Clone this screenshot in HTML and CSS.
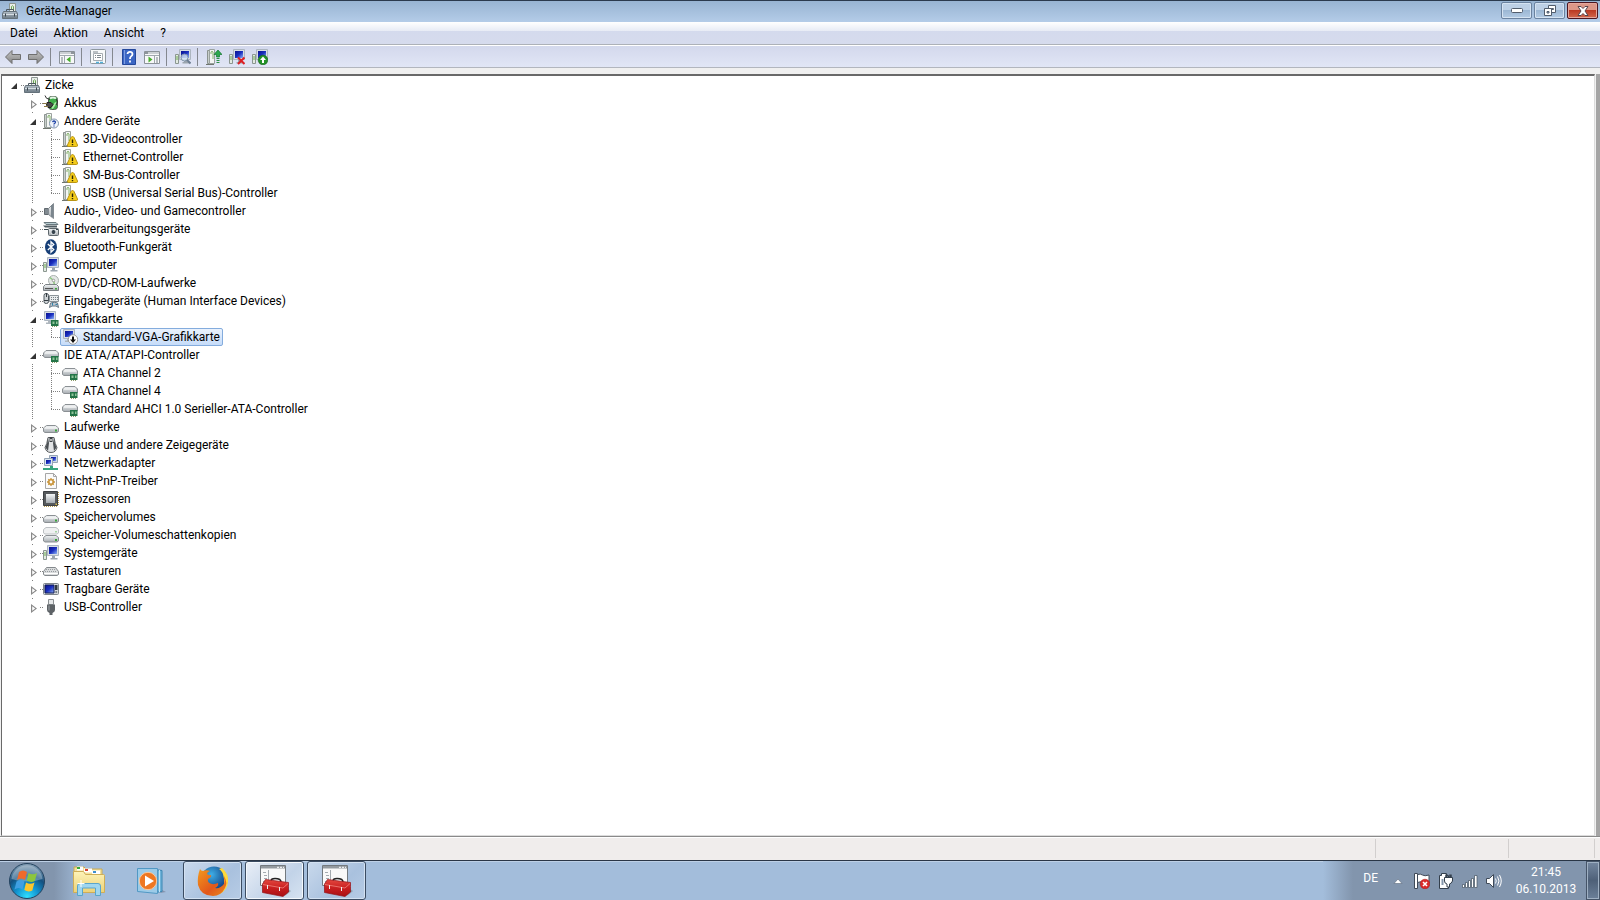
FILE: index.html
```html
<!DOCTYPE html>
<html lang="de">
<head>
  <meta charset="UTF-8">
  <meta name="viewport" content="width=device-width, initial-scale=1.0">
  <title>Geräte-Manager</title>
  <link rel="stylesheet" href="styles.css">
</head>
<body>
  <svg class="sprite" width="0" height="0" aria-hidden="true">
    <defs>
      <linearGradient id="metal" x1="0" y1="0" x2="0" y2="1"><stop offset="0" stop-color="#f4f6f7"/><stop offset="1" stop-color="#a5abb0"/></linearGradient>
      <linearGradient id="steel" x1="0" y1="0" x2="0" y2="1"><stop offset="0" stop-color="#b4bfc8"/><stop offset="1" stop-color="#6c7a84"/></linearGradient>
      <linearGradient id="lcd" x1="0" y1="0" x2="1" y2="1"><stop offset="0" stop-color="#0a118f"/><stop offset=".5" stop-color="#1a2fc0"/><stop offset="1" stop-color="#8fb4f5"/></linearGradient>
      <linearGradient id="arrow" x1="0" y1="0" x2="0" y2="1"><stop offset="0" stop-color="#c3c3c3"/><stop offset="1" stop-color="#858585"/></linearGradient>
      <linearGradient id="red" x1="0" y1="0" x2="0" y2="1"><stop offset="0" stop-color="#e5483f"/><stop offset=".5" stop-color="#c81f20"/><stop offset="1" stop-color="#a90f14"/></linearGradient>
      <linearGradient id="folder" x1="0" y1="0" x2="0" y2="1"><stop offset="0" stop-color="#fdf3b8"/><stop offset="1" stop-color="#ecd278"/></linearGradient>
      <radialGradient id="orb" cx=".5" cy=".95" r=".95"><stop offset="0" stop-color="#2fe0ff"/><stop offset=".35" stop-color="#1293cf"/><stop offset=".65" stop-color="#14507f"/><stop offset="1" stop-color="#8aa3b8"/></radialGradient>
      <linearGradient id="fox" x1="0" y1="0" x2="1" y2="1"><stop offset="0" stop-color="#f39a1d"/><stop offset=".6" stop-color="#e2571b"/><stop offset="1" stop-color="#e98a1c"/></linearGradient>
      <radialGradient id="globe" cx=".4" cy=".3" r=".7"><stop offset="0" stop-color="#3fb0e8"/><stop offset="1" stop-color="#0b2f73"/></radialGradient>
    </defs>

    <symbol id="i-manager" viewBox="0 0 16 16">
      <path d="M7.5.5h6v8h-6z" fill="#e9ede9" stroke="#8d9691"/>
      <path d="M9.500 7V3.500q1-1.500 2 0V7" fill="none" stroke="#6aa553"/>
      <path d="M4.500 9V6.500h7V9" fill="none" stroke="#4d5961"/>
      <path d="M1.500 8.500h13l1 2.500v4.500H.5V11z" fill="url(#steel)" stroke="#64717a"/>
      <path d="M1 11.500h14" stroke="#d7dfe4"/>
      <path d="M3.500 10.500v3M12.500 10.500v3" stroke="#3b464d"/>
    </symbol>
    <symbol id="i-akku" viewBox="0 0 16 16">
      <rect x="5.500" y="1.500" width="9" height="13" rx="3" fill="#3fae4a" stroke="#4d5a4e"/>
      <path d="M7 3.500q3-2 6 0" stroke="#e4f5e4" stroke-width="2" fill="none"/>
      <path d="M9 13.500l4-6" stroke="#a9eca5" stroke-width="2"/>
      <path d="M2 .5Q2.500 4 7 4.500M13 4q3 3 0 6" fill="none" stroke="#333"/>
      <path d="M4 7.500h4l2 2-2 3H5L3.500 10z" fill="#4a4a4a" stroke="#222"/>
      <path d="M0 8.500h4M1 11.500h4" stroke="#8c7a45"/>
    </symbol>
    <symbol id="i-card" viewBox="0 0 16 16">
      <path d="M1.500 1.500h2v13h-2z" fill="#c8cecb" stroke="#8b938f"/>
      <path d="M3.500.5h5v14h-5z" fill="#f3f5f3" stroke="#9aa29e"/>
      <path d="M5 5V3q1-1.500 2 0v7" fill="none" stroke="#86b36f"/>
      <path d="M0 15.500h8" stroke="#70766f"/>
    </symbol>
    <symbol id="i-other" viewBox="0 0 16 16">
      <use href="#i-card" width="16" height="16"/>
      <circle cx="11" cy="10.500" r="4.500" fill="#f0f4fa" stroke="#8093ab"/>
      <path d="M9.500 9q1.500-2 3 0 0 1-1.500 2v.5M11 12.500v1" fill="none" stroke="#2346a8" stroke-width="1.300"/>
    </symbol>
    <symbol id="i-warn" viewBox="0 0 16 16">
      <use href="#i-card" width="16" height="16"/>
      <path d="M10.500 5.500q1 0 1.500 1l3.500 7.500q.2 1.500-1 1.500h-8q-1.200 0-1-1.500L9 6.500q.5-1 1.500-1z" fill="#f4cc1b" stroke="#b99413"/>
      <path d="M10.500 8.500v3.500M10.500 13v1.300" stroke="#2d2508" stroke-width="1.400"/>
    </symbol>
    <symbol id="i-audio" viewBox="0 0 16 16">
      <path d="M1.500 5.500h4v6h-4z" fill="#818a91" stroke="#61696f"/>
      <path d="M5.500 5.500L10.500.5v15l-5-4z" fill="url(#metal)" stroke="#858d93"/>
      <path d="M9 2v12" stroke="#7b868e" stroke-width="2"/>
    </symbol>
    <symbol id="i-camera" viewBox="0 0 16 16">
      <path d="M1 1.500h12l2 2H3z" fill="#b7cbd0" stroke="#69787e"/>
      <path d="M0 4.500h14v2H2z" fill="#4f5c63"/>
      <rect x="5.500" y="7.500" width="10" height="7" rx="1" fill="url(#metal)" stroke="#5e676c"/>
      <circle cx="10.500" cy="11" r="2.500" fill="#36434d" stroke="#e0e5e8"/>
      <path d="M13 8.500h2M1 8.500h4" stroke="#37474f"/>
    </symbol>
    <symbol id="i-bt" viewBox="0 0 16 16">
      <ellipse cx="8" cy="8" rx="6" ry="7.800" fill="#173f77"/>
      <path d="M4.800 5l6 5.500L8 13.200V2.800l2.800 2.700-6 5.500" fill="none" stroke="#fff" stroke-width="1.300"/>
    </symbol>
    <symbol id="i-computer" viewBox="0 0 16 16">
      <path d="M.5 5.500h3v9h-3z" fill="#e3ebe2" stroke="#8b9790"/>
      <path d="M2 7v4" stroke="#6fae55"/>
      <path d="M4.500.5h11v10h-11z" fill="#d8dee5" stroke="#adb6c0"/>
      <path d="M6 2h8v7H6z" fill="url(#lcd)"/>
      <path d="M9 11h3v2h2.500v1.500h-7V13H9z" fill="#9ba5ae"/>
    </symbol>
    <symbol id="i-dvd" viewBox="0 0 16 16">
      <circle cx="10.500" cy="5.500" r="5" fill="#e4e8e6" stroke="#a9b0ad"/>
      <path d="M10.500 5.500L7 2.500M10.500 5.500l1 4.500" stroke="#8cc77d" stroke-width="1.500"/>
      <circle cx="10.500" cy="5.500" r="1.300" fill="#fff" stroke="#999"/>
      <path d="M2.500 9.500h11l2 2v4H.5v-4z" fill="url(#metal)" stroke="#7b8185"/>
      <path d="M2 13.500h8" stroke="#555"/><path d="M12 13h2v1.500h-2z" fill="#3da53d"/>
    </symbol>
    <symbol id="i-hid" viewBox="0 0 16 16">
      <path d="M6.500 2.500h9v6h-9z" fill="#e9eced" stroke="#8c9499"/>
      <path d="M8 4.500h7M8 6.500h7" stroke="#788188" stroke-dasharray="1 1"/>
      <rect x="1" y=".5" width="4.500" height="10" rx="2" fill="#cfd4d7" stroke="#4e575d"/>
      <path d="M3.500 0v4M1 7.500h4" stroke="#343c42"/>
      <path d="M6.500 14.500l1-4.500q4-1.500 7 0l1 4.500-2.500-1.500H9z" fill="#bcc6ce" stroke="#647582"/>
      <path d="M9.500 10v2.500M12.500 11.500h2" stroke="#3183ac"/>
    </symbol>
    <symbol id="i-chip" viewBox="0 0 16 16">
      <path d="M8 9h7.500v6H8z" fill="#237447"/>
      <path d="M9.500 10.500h2v2.500h-2zM13 10.500h1.500V13H13z" fill="#91c49a"/>
      <path d="M9 15.500h5" stroke="#8d9b69" stroke-dasharray="1 1"/>
    </symbol>
    <symbol id="i-gpu" viewBox="0 0 16 16">
      <path d="M1.500.5h11v9h-11z" fill="#d8dee5" stroke="#adb6c0"/>
      <path d="M3 2h8v6H3z" fill="url(#lcd)"/>
      <path d="M5 10h3v3H3v-1.500h2z" fill="#aeb6bd"/>
      <use href="#i-chip" width="16" height="16"/>
    </symbol>
    <symbol id="i-vga" viewBox="0 0 16 16">
      <path d="M1.500.5h11v9h-11z" fill="#d8dee5" stroke="#adb6c0"/>
      <path d="M3 2h8v6H3z" fill="url(#lcd)"/>
      <path d="M5 10h3v3H3v-1.500h2z" fill="#aeb6bd"/>
      <circle cx="11" cy="10.500" r="4.700" fill="#fff" stroke="#888" stroke-width=".8"/>
      <path d="M11 7.500v4" stroke="#111" stroke-width="2"/><path d="M8 10.500h6l-3 3.500z" fill="#111"/>
    </symbol>
    <symbol id="i-drive" viewBox="0 0 16 16">
      <path d="M3.500 6.500h9l3 2.500v3.500l-1.500 1H2L.5 12.500V9z" fill="url(#metal)" stroke="#8b9094"/>
      <path d="M1.500 9h13" stroke="#fff"/>
      <path d="M12 10.500h2v2h-2z" fill="#3aa53a"/>
    </symbol>
    <symbol id="i-ide" viewBox="0 0 16 16">
      <path d="M3 3.500h10l2.500 2.500v3.500l-1.500 1H2L.5 9.500V6z" fill="url(#metal)" stroke="#8b9094"/>
      <path d="M2 6h12" stroke="#fff"/>
      <use href="#i-chip" width="16" height="16"/>
    </symbol>
    <symbol id="i-mouse" viewBox="0 0 16 16">
      <path d="M5 .5h6q1 7 3 10-1 5-6 5t-6-5q2-3 3-10z" fill="#e1e3e5" stroke="#5d6164"/>
      <path d="M5 1q-.5 6-2.500 9.500L5 14l1-8zM11 1q.5 6 2.500 9.500L11 14l-1-8z" fill="#4b5054"/>
      <path d="M6.500 0h3v5h-3z" fill="#3b4044"/><circle cx="8" cy="3" r="1" fill="#ddd"/>
    </symbol>
    <symbol id="i-net" viewBox="0 0 16 16">
      <path d="M6.500.5h8v7h-8z" fill="#cfd9e5" stroke="#96a5b5"/><path d="M8 2h5v4H8z" fill="url(#lcd)"/>
      <path d="M1.500 3.500h8v7h-8z" fill="#dde6ef" stroke="#96a5b5"/><path d="M3 5h5v4H3z" fill="url(#lcd)"/>
      <path d="M7 11h3v2h5v2H0v-2h7z" fill="#38a67d"/>
    </symbol>
    <symbol id="i-pnp" viewBox="0 0 16 16">
      <path d="M2.500.5h8l3 3v12h-11z" fill="#fafafa" stroke="#a7a7a7"/><path d="M10.500.5v3h3" fill="none" stroke="#a7a7a7"/>
      <circle cx="8" cy="9" r="3" fill="#c9953b"/>
      <path d="M8 5v8M4 9h8M5.300 6.300l5.400 5.400M10.700 6.300l-5.400 5.400" stroke="#c9953b" stroke-width="1.300"/>
      <circle cx="8" cy="9" r="1.400" fill="#fff"/>
    </symbol>
    <symbol id="i-cpu" viewBox="0 0 16 16">
      <path d="M1 15.200h14M15.200 1v14" stroke="#b79b4e" stroke-width="1.500" stroke-dasharray="1 1"/>
      <path d="M.5.500h14v14H.5z" fill="#565a5d" stroke="#3d4043"/>
      <path d="M3 3h9v9H3z" fill="url(#metal)"/>
      <path d="M12.500 12.500h1.500V14h-1.500z" fill="#d8bc4a"/>
    </symbol>
    <symbol id="i-shadow" viewBox="0 0 16 16">
      <path d="M3 .5h10l2.500 2V6l-1.500 1H2L.5 6V2.500z" fill="#eff0f1" stroke="#bcc0c3"/>
      <path d="M12 4h2v1.500h-2z" fill="#a4d4a4"/>
      <path d="M3 8.500h10l2.500 2V14l-1.500 1H2L.5 14v-3.500z" fill="url(#metal)" stroke="#8b9094"/>
      <path d="M12 12h2v2h-2z" fill="#3aa53a"/>
    </symbol>
    <symbol id="i-keyboard" viewBox="0 0 16 16">
      <path d="M3.500 4.500h9l3 4v3l-1.500 1H2l-1.500-1v-3z" fill="#dadcdd" stroke="#84898d"/>
      <path d="M3 6.500h10M2 8.500h12" stroke="#969b9f" stroke-dasharray="1 1"/>
      <path d="M1 10.500h14" stroke="#fff"/>
    </symbol>
    <symbol id="i-portable" viewBox="0 0 16 16">
      <rect x=".5" y="2.500" width="15" height="11" rx="1" fill="#d5d9dd" stroke="#7e858b"/>
      <path d="M2 4h9v8H2z" fill="url(#lcd)" stroke="#101a55"/>
      <path d="M12 4h2.500v5H12z" fill="#30383f"/><circle cx="13.200" cy="11" r="1" fill="#6c767d"/>
    </symbol>
    <symbol id="i-usb" viewBox="0 0 16 16">
      <path d="M5.500.5h5v5h-5z" fill="#e6e8e9" stroke="#8b9093"/>
      <path d="M4 5.500h8V11q0 2-2.500 3v2h-3v-2Q4 13 4 11z" fill="#5d6266"/>
      <path d="M6 6.500v5" stroke="#a1a6aa"/>
    </symbol>
    <symbol id="i-back" viewBox="0 0 16 16">
      <path d="M.5 8L7 1.500v4h8.500v5H7v4z" fill="url(#arrow)" stroke="#6f6f6f"/>
    </symbol>
    <symbol id="i-console" viewBox="0 0 16 16">
      <path d="M.5 2.500h15v12H.5z" fill="#f7f8f9" stroke="#8b9299"/>
      <path d="M1 4h14M1 6.500h14" stroke="#a1a8af"/><path d="M12 4h3" stroke="#4f5962"/>
      <path d="M2 9h2M2 11h2M2 13h2" stroke="#76818a"/><path d="M5.500 7v7" stroke="#a1a8af"/>
      <path d="M11.500 7.500v6l-4-3z" fill="#46ae2b"/>
    </symbol>
    <symbol id="i-props" viewBox="0 0 16 16">
      <rect x=".5" y=".5" width="15" height="14" rx="1" fill="#f7f9fa" stroke="#8e989f"/>
      <path d="M3.500 4.500h9v7h-9z" fill="#fff" stroke="#a6adb2"/>
      <path d="M3 3h5M5 6.500h1M7 6.500h4M5 8.500h1M7 8.500h4" stroke="#7e888f"/>
      <path d="M6 13.500h3M10 13.500h3" stroke="#51b0da" stroke-width="1.500"/>
    </symbol>
    <symbol id="i-help" viewBox="0 0 16 16">
      <path d="M1.500.5h13v15h-13z" fill="#3b66c4" stroke="#24489c"/><path d="M3.500 1v14" stroke="#7c9be0"/>
      <path d="M6.500 5q.2-2.200 2.500-2.200T11.500 5q0 1.500-1.300 2.200T9 10M9 11.500v2" fill="none" stroke="#fff" stroke-width="1.800"/>
    </symbol>
    <symbol id="i-scan" viewBox="0 0 16 16">
      <use href="#i-computer" width="16" height="16"/>
      <circle cx="9.500" cy="8.500" r="3.500" fill="#d4e4f3" fill-opacity=".8" stroke="#7f94a9"/>
      <path d="M12 11l3.500 3.500" stroke="#6b7d90" stroke-width="2"/>
    </symbol>
    <symbol id="i-update" viewBox="0 0 16 16">
      <use href="#i-card" width="16" height="16"/>
      <path d="M12 1l4 4.500h-2.500V8h-3V5.500H8z" fill="#2ca84c" stroke="#157731" stroke-width=".7"/>
      <path d="M10.500 9.500h3M10.500 11.500h3M10.500 13.500h3" stroke="#2c9247"/>
    </symbol>
    <symbol id="i-remove" viewBox="0 0 16 16">
      <use href="#i-computer" width="16" height="16"/>
      <path d="M9 8.500l6.500 6.500M15.500 8.500L9 15" stroke="#dd1f24" stroke-width="2"/>
    </symbol>
    <symbol id="i-enable" viewBox="0 0 16 16">
      <use href="#i-computer" width="16" height="16"/>
      <circle cx="11" cy="11" r="4.800" fill="#229227" stroke="#146018" stroke-width=".6"/>
      <path d="M11 14v-4" stroke="#fff" stroke-width="2"/><path d="M8 11l3-3.500 3 3.500z" fill="#fff"/>
    </symbol>
    <symbol id="i-toolbox" viewBox="0 0 32 32">
      <path d="M1.500.5h25v20h-25z" fill="#f9f9f9" stroke="#73797e"/>
      <path d="M2 1h24v2.500H2z" fill="#949a9f"/><path d="M18 2.300h2M21 2.300h2M24 2.300h1" stroke="#fff"/>
      <path d="M9.500 5v12M4 7.500h3M5 10.500h3M5 13.500h3M4 16.500h3" stroke="#a4abb0"/>
      <path d="M26 31l6-5-3-2z" fill="#566" opacity=".4"/>
      <path d="M12 16q0-2.500 4-2.500 6 0 6 3.500" fill="none" stroke="#222" stroke-width="1.500"/>
      <path d="M3.500 19l3-4.500L29.500 17.500v4V27L24 31.500 3.500 27.500z" fill="url(#red)" stroke="#941219" stroke-width=".7"/>
      <path d="M4 19.500l20 3.500 5-4.500" fill="none" stroke="#f0837b" stroke-width=".8"/>
      <path d="M8.500 20v4M20.500 22v4" stroke="#eee"/>
    </symbol>
  </svg>

  <main class="window">
    <header class="titlebar">
      <svg class="icon"><use href="#i-manager"/></svg>
      <h1 class="title">Geräte-Manager</h1>
      <div class="window-buttons">
        <button class="win-btn" aria-label="Minimieren"><svg width="12" height="6"><rect x=".5" y=".5" width="11" height="4" rx="1" fill="#fff" stroke="#525d6c"/></svg></button>
        <button class="win-btn" aria-label="Verkleinern"><svg width="12" height="12"><path d="M4.500.5h7v7h-7z" fill="#fff" stroke="#525d6c"/><path d="M7.500 3.500h2v1h-2z" fill="none" stroke="#525d6c"/><path d="M.5 3.500h7v7h-7z" fill="#fff" stroke="#525d6c"/><path d="M3 6.500h2v1.500H3z" fill="#9db8d6" stroke="#525d6c"/></svg></button>
        <button class="win-btn close" aria-label="Schließen"><svg width="12" height="10"><path d="M1 .5h3l2 2 2-2h3L8 5l3 4.500H8l-2-2-2 2H1L4 5z" fill="#fff" stroke="#58434a"/></svg></button>
      </div>
    </header>

    <nav class="menubar">
      <button class="menu-item">Datei</button>
      <button class="menu-item">Aktion</button>
      <button class="menu-item">Ansicht</button>
      <button class="menu-item">?</button>
    </nav>

    <div class="toolbar">
      <button class="tool" aria-label="Zurück"><svg class="icon"><use href="#i-back"/></svg></button>
      <button class="tool" aria-label="Vorwärts"><svg class="icon flip"><use href="#i-back"/></svg></button>
      <span class="sep"></span>
      <button class="tool" aria-label="Konsolenstruktur"><svg class="icon"><use href="#i-console"/></svg></button>
      <span class="sep"></span>
      <button class="tool" aria-label="Eigenschaften"><svg class="icon"><use href="#i-props"/></svg></button>
      <span class="sep"></span>
      <button class="tool" aria-label="Hilfe"><svg class="icon"><use href="#i-help"/></svg></button>
      <button class="tool" aria-label="Aktionsbereich"><svg class="icon flip"><use href="#i-console"/></svg></button>
      <span class="sep"></span>
      <button class="tool" aria-label="Nach geänderter Hardware suchen"><svg class="icon"><use href="#i-scan"/></svg></button>
      <span class="sep"></span>
      <button class="tool" aria-label="Treibersoftware aktualisieren"><svg class="icon"><use href="#i-update"/></svg></button>
      <button class="tool" aria-label="Deinstallieren"><svg class="icon"><use href="#i-remove"/></svg></button>
      <button class="tool" aria-label="Aktivieren"><svg class="icon"><use href="#i-enable"/></svg></button>
    </div>

    <div class="content">
      <ul class="tree">
        <li class="root">
          <div class="row"><button class="toggle open" aria-label="Zicke"></button><svg class="icon"><use href="#i-manager"/></svg><span class="label">Zicke</span></div>
          <ul class="branch">
            <li><div class="row"><button class="toggle" aria-label="Akkus"></button><svg class="icon"><use href="#i-akku"/></svg><span class="label">Akkus</span></div></li>
            <li>
              <div class="row"><button class="toggle open" aria-label="Andere Geräte"></button><svg class="icon"><use href="#i-other"/></svg><span class="label">Andere Geräte</span></div>
              <ul class="branch">
                <li><div class="row leaf"><svg class="icon"><use href="#i-warn"/></svg><span class="label">3D-Videocontroller</span></div></li>
                <li><div class="row leaf"><svg class="icon"><use href="#i-warn"/></svg><span class="label">Ethernet-Controller</span></div></li>
                <li><div class="row leaf"><svg class="icon"><use href="#i-warn"/></svg><span class="label">SM-Bus-Controller</span></div></li>
                <li><div class="row leaf"><svg class="icon"><use href="#i-warn"/></svg><span class="label">USB (Universal Serial Bus)-Controller</span></div></li>
              </ul>
            </li>
            <li><div class="row"><button class="toggle" aria-label="Audio"></button><svg class="icon"><use href="#i-audio"/></svg><span class="label">Audio-, Video- und Gamecontroller</span></div></li>
            <li><div class="row"><button class="toggle" aria-label="Bildverarbeitungsgeräte"></button><svg class="icon"><use href="#i-camera"/></svg><span class="label">Bildverarbeitungsgeräte</span></div></li>
            <li><div class="row"><button class="toggle" aria-label="Bluetooth-Funkgerät"></button><svg class="icon"><use href="#i-bt"/></svg><span class="label">Bluetooth-Funkgerät</span></div></li>
            <li><div class="row"><button class="toggle" aria-label="Computer"></button><svg class="icon"><use href="#i-computer"/></svg><span class="label">Computer</span></div></li>
            <li><div class="row"><button class="toggle" aria-label="DVD/CD-ROM-Laufwerke"></button><svg class="icon"><use href="#i-dvd"/></svg><span class="label">DVD/CD-ROM-Laufwerke</span></div></li>
            <li><div class="row"><button class="toggle" aria-label="Eingabegeräte"></button><svg class="icon"><use href="#i-hid"/></svg><span class="label">Eingabegeräte (Human Interface Devices)</span></div></li>
            <li>
              <div class="row"><button class="toggle open" aria-label="Grafikkarte"></button><svg class="icon"><use href="#i-gpu"/></svg><span class="label">Grafikkarte</span></div>
              <ul class="branch">
                <li><div class="row leaf selected"><svg class="icon"><use href="#i-vga"/></svg><span class="label">Standard-VGA-Grafikkarte</span></div></li>
              </ul>
            </li>
            <li>
              <div class="row"><button class="toggle open" aria-label="IDE ATA/ATAPI-Controller"></button><svg class="icon"><use href="#i-ide"/></svg><span class="label">IDE ATA/ATAPI-Controller</span></div>
              <ul class="branch">
                <li><div class="row leaf"><svg class="icon"><use href="#i-ide"/></svg><span class="label">ATA Channel 2</span></div></li>
                <li><div class="row leaf"><svg class="icon"><use href="#i-ide"/></svg><span class="label">ATA Channel 4</span></div></li>
                <li><div class="row leaf"><svg class="icon"><use href="#i-ide"/></svg><span class="label">Standard AHCI 1.0 Serieller-ATA-Controller</span></div></li>
              </ul>
            </li>
            <li><div class="row"><button class="toggle" aria-label="Laufwerke"></button><svg class="icon"><use href="#i-drive"/></svg><span class="label">Laufwerke</span></div></li>
            <li><div class="row"><button class="toggle" aria-label="Mäuse und andere Zeigegeräte"></button><svg class="icon"><use href="#i-mouse"/></svg><span class="label">Mäuse und andere Zeigegeräte</span></div></li>
            <li><div class="row"><button class="toggle" aria-label="Netzwerkadapter"></button><svg class="icon"><use href="#i-net"/></svg><span class="label">Netzwerkadapter</span></div></li>
            <li><div class="row"><button class="toggle" aria-label="Nicht-PnP-Treiber"></button><svg class="icon"><use href="#i-pnp"/></svg><span class="label">Nicht-PnP-Treiber</span></div></li>
            <li><div class="row"><button class="toggle" aria-label="Prozessoren"></button><svg class="icon"><use href="#i-cpu"/></svg><span class="label">Prozessoren</span></div></li>
            <li><div class="row"><button class="toggle" aria-label="Speichervolumes"></button><svg class="icon"><use href="#i-drive"/></svg><span class="label">Speichervolumes</span></div></li>
            <li><div class="row"><button class="toggle" aria-label="Speicher-Volumeschattenkopien"></button><svg class="icon"><use href="#i-shadow"/></svg><span class="label">Speicher-Volumeschattenkopien</span></div></li>
            <li><div class="row"><button class="toggle" aria-label="Systemgeräte"></button><svg class="icon"><use href="#i-computer"/></svg><span class="label">Systemgeräte</span></div></li>
            <li><div class="row"><button class="toggle" aria-label="Tastaturen"></button><svg class="icon"><use href="#i-keyboard"/></svg><span class="label">Tastaturen</span></div></li>
            <li><div class="row"><button class="toggle" aria-label="Tragbare Geräte"></button><svg class="icon"><use href="#i-portable"/></svg><span class="label">Tragbare Geräte</span></div></li>
            <li><div class="row"><button class="toggle" aria-label="USB-Controller"></button><svg class="icon"><use href="#i-usb"/></svg><span class="label">USB-Controller</span></div></li>
          </ul>
        </li>
      </ul>
    </div>

    <div class="statusbar">
      <span class="pane grow"></span>
      <span class="pane wide"></span>
      <span class="pane narrow"></span>
    </div>
  </main>

  <footer class="taskbar">
    <button class="start" aria-label="Start">
      <svg width="38" height="38" viewBox="0 0 38 38">
        <circle cx="19" cy="19" r="17.500" fill="url(#orb)" stroke="#24435f"/>
        <path d="M3.500 17A15.600 15.600 0 0 1 34.500 17Q19 22 3.500 17z" fill="#fff" opacity=".3"/>
        <path d="M11 10q4-3 8 0l-2 8q-4-3-8 0z" fill="#ef6a2c"/>
        <path d="M20.500 11q4 2.500 8.500 0l-2.200 8q-4 2-8-.5z" fill="#8cc63e"/>
        <path d="M8.500 19.500q4-3 8 0l-2 8q-4-3-8 0z" fill="#3f9fe2"/>
        <path d="M18 20.500q4 2.500 8.500 0l-2.200 8q-4 2-8-.5z" fill="#fbc62c"/>
      </svg>
    </button>
    <button class="task" aria-label="Windows-Explorer">
      <svg width="34" height="32" viewBox="0 0 34 32">
        <path d="M2 5V2h10l2 2h16v6H2z" fill="#f3e19b" stroke="#c6a956"/>
        <path d="M5 1.500h6v4H5z" fill="#fff"/><path d="M5 2h3v2H5z" fill="#39a935"/>
        <path d="M12 3.500h8v4h-8z" fill="#fff"/><path d="M13 4h3v2h-3z" fill="#d8412c"/>
        <path d="M20 5.500h8v4h-8z" fill="#fff"/><path d="M21 6h3v2h-3z" fill="#3d8fd1"/>
        <path d="M1.500 6.500h10l2 3h18q1 0 1 1v17h-31z" fill="url(#folder)" stroke="#cfae57"/>
        <path d="M5.500 30.500V21q0-2.500 2.500-2.500h18q2.500 0 2.500 2.500v9.500h-5V23h-13v7.500z" fill="#9fd6ef" stroke="#5aa5cb"/>
        <path d="M9 15v7M5.500 18.500h7" stroke="#fff"/>
      </svg>
    </button>
    <button class="task" aria-label="Windows Media Player">
      <svg width="30" height="28" viewBox="0 0 30 28">
        <path d="M24 26l6-1-4-2z" fill="#556" opacity=".4"/>
        <path d="M19 2.500l7 1v21l-7 1z" fill="#6fb3d9" stroke="#3c87b3"/><path d="M23.500 3v22" stroke="#c3e4f5"/>
        <path d="M1.500 1.500h20v25l-20-2z" fill="#9ccbe8" stroke="#5198c4"/>
        <circle cx="12" cy="14" r="8.700" fill="#ee7722" stroke="#f8c9a0"/>
        <path d="M9 8.500v11l9-5.500z" fill="#fff"/>
      </svg>
    </button>
    <button class="task running" aria-label="Firefox">
      <svg width="32" height="32" viewBox="0 0 32 32">
        <circle cx="17" cy="15" r="13.500" fill="url(#globe)"/>
        <path d="M25 3q7 6 6 14-1 8-8 12 5-7 4-15T22 4z" fill="#ffd93b"/>
        <path d="M3 4q1 2 3 2 4-1.500 7 0-3 1-3 3 1 1.500 4 1 1 2-3 4-1 4 4 5 3 .5 6-1 1 3-3 5 5 1 9-4 1-3 0-8 4 7 1 12-4 8-12 8Q4 31 1 20 0 12 3 4z" fill="url(#fox)"/>
      </svg>
    </button>
    <button class="task running active" aria-label="Geräte-Manager"><svg width="32" height="32"><use href="#i-toolbox"/></svg></button>
    <button class="task running" aria-label="Computerverwaltung"><svg width="32" height="32"><use href="#i-toolbox"/></svg></button>

    <div class="tray">
      <span class="lang">DE</span>
      <button class="tray-btn" aria-label="Ausgeblendete Symbole"><svg width="16" height="16"><path d="M4 10.500L8 6l4 4.500z" fill="#fff" stroke="#5b6a7c" stroke-width=".6"/></svg></button>
      <button class="tray-btn" aria-label="Wartungscenter"><svg width="16" height="16"><path d="M.5.5h3v15h-3z" fill="#fff" stroke="#3f4a58"/><path d="M3.500 1.500q3-1 5 .5t6.500 0v8q-4 1-6-.5t-5.500 0z" fill="#fff" stroke="#3f4a58"/><circle cx="11" cy="11" r="4.800" fill="#d92b2b" stroke="#a91515" stroke-width=".5"/><path d="M9 9l4 4M13 9l-4 4" stroke="#fff" stroke-width="1.600"/></svg></button>
      <button class="tray-btn" aria-label="Energie"><svg width="16" height="16"><path d="M1.500 2.500h2v-2h5v2h2v13h-9z" fill="#fff" stroke="#333f4c"/><path d="M4.500 6v6" stroke="#8596aa" stroke-width="2"/><path d="M8.500 5V1.500M12.500 5V1.500" stroke="#333f4c" stroke-width="2.500"/><path d="M6.500 4.500h8V8q-1 2.500-3 3v3H9v-3q-2.500-.5-2.500-3z" fill="#fff" stroke="#333f4c"/></svg></button>
      <button class="tray-btn" aria-label="Netzwerk"><svg width="16" height="16"><path d="M.5 11.500h2v3h-2zM3.500 9.500h2v5h-2zM6.500 7.500h2v7h-2zM9.500 5.500h2v9h-2zM12.500 2.500h2.500v12h-2.500z" fill="#fff" stroke="#44515f" stroke-width=".7"/></svg></button>
      <button class="tray-btn" aria-label="Lautstärke"><svg width="16" height="16"><path d="M.5 5.500h3L7.500 1.500v13l-4-4h-3z" fill="#fff" stroke="#3f4a58"/><path d="M9.500 5.500q1.500 2.500 0 5M11.500 3.500q3 4.500 0 9M13.500 2q3.500 6 0 12" fill="none" stroke="#fff"/></svg></button>
      <div class="clock"><span>21:45</span><span>06.10.2013</span></div>
      <button class="show-desktop" aria-label="Desktop anzeigen"></button>
    </div>
  </footer>
</body>
</html>
```
FILE: styles.css
```css
* {
  box-sizing: border-box;
}
body {
  margin: 0;
  height: 100vh;
  display: flex;
  flex-direction: column;
  overflow: hidden;
  background: #f0f0f0;
  font-family: Roboto, "Open Sans", sans-serif;
  font-size: 12px;
  color: #000;
}
button {
  margin: 0;
  padding: 0;
  border: 0;
  background: none;
  font: inherit;
  color: inherit;
}
ul {
  list-style: none;
  margin: 0;
  padding: 0;
}
svg {
  display: block;
  flex: none;
}
.sprite {
  position: absolute;
}
.icon {
  width: 16px;
  height: 16px;
}
.flip {
  transform: scaleX(-1);
}
.window {
  flex: 1;
  min-height: 0;
  display: flex;
  flex-direction: column;
}

/* title bar */
.titlebar {
  height: 22px;
  display: flex;
  align-items: center;
  padding: 0 2px 2px;
  border-top: 1px solid #2b3a4d;
  background: linear-gradient(#98b4d2, #b4cce8);
}
.title {
  flex: 1;
  margin: 0 0 0 8px;
  font-size: 12px;
  font-weight: normal;
}
.window-buttons {
  display: flex;
  gap: 2px;
}
.win-btn {
  width: 31px;
  height: 17px;
  display: flex;
  align-items: center;
  justify-content: center;
  border: 1px solid #6b829f;
  border-radius: 2px;
  box-shadow: inset 0 0 0 1px #d5e3f2;
  background: linear-gradient(#bdd0e6 50%, #9cb7d4 50%, #b3cbe4);
}
.win-btn.close {
  border-color: #4d1620;
  box-shadow: inset 0 0 0 1px #e5a79c;
  background: linear-gradient(#dc9788 50%, #bb3a23 50%, #d2694e);
}

/* menu and toolbar */
.menubar {
  height: 23px;
  display: flex;
  padding: 0 2px 1px;
  border-bottom: 1px solid #adb1b8;
  background: linear-gradient(#fff, #e7ebf5 9px, #d4daed 9px, #d6dbed);
}
.menu-item {
  padding: 0 8px;
}
.toolbar {
  height: 23px;
  display: flex;
  align-items: center;
  padding: 0 1px;
  border-top: 1px solid #fff;
  border-bottom: 1px solid #b2b6be;
  background: linear-gradient(#d3d8ec, #e1e6f6);
}
.tool {
  width: 23px;
  height: 20px;
  display: flex;
  align-items: center;
  justify-content: center;
}
.sep {
  width: 1px;
  height: 18px;
  margin: 0 4px 0 3px;
  background: #84888f;
}

/* device tree */
.content {
  flex: 1;
  min-height: 0;
  display: flex;
  margin-top: 6px;
  padding-right: 1px;
  border-right: 4px solid #a5a5a5;
  background: #f0f0f0;
}
.tree {
  flex: 1;
  overflow: hidden;
  margin-left: 1px;
  padding-left: 3px;
  border: 1px solid #dcdcdc;
  border-top: 2px solid #696969;
  border-left: 1px solid #696969;
  background: #fff;
}
.branch {
  padding-left: 19px;
}
.tree li {
  position: relative;
}
.branch > li::before {
  content: "";
  position: absolute;
  left: 8px;
  top: 0;
  bottom: 0;
  width: 1px;
  background: repeating-linear-gradient(#808080 0 1px, transparent 1px 2px);
}
.branch > li:last-child::before {
  bottom: auto;
  height: 10px;
}
.row {
  position: relative;
  display: flex;
  align-items: center;
  width: max-content;
  height: 18px;
}
.row::before {
  content: "";
  position: absolute;
  left: 16px;
  top: 9px;
  width: 3px;
  height: 1px;
  background: repeating-linear-gradient(90deg, #808080 0 1px, transparent 1px 2px);
}
.row.leaf::before {
  left: 8px;
  width: 10px;
}
.row.leaf {
  padding-left: 19px;
}
.toggle {
  position: relative;
  width: 15px;
  height: 16px;
  margin-right: 4px;
  background: #fff;
}
.toggle::before {
  content: "";
  display: block;
  width: 6px;
  height: 9px;
  margin: 3px 0 0 7px;
  background: #8a8a8a;
  clip-path: polygon(0 0, 100% 50%, 0 100%, 0 80%, 20% 74%, 70% 50%, 20% 26%, 20% 74%, 0 80%);
}
.toggle.open::before {
  width: 6px;
  height: 6px;
  margin: 2px 0 0 6px;
  background: #333;
  clip-path: polygon(100% 0, 100% 100%, 0 100%);
}
.label {
  height: 18px;
  padding: 0 3px 0 5px;
  line-height: 18px;
  white-space: nowrap;
}
.selected .icon,
.selected .label {
  position: relative;
  z-index: 1;
}
.selected::after {
  content: "";
  position: absolute;
  left: 17px;
  right: 0;
  top: 0;
  bottom: 0;
  border: 1px solid #84acdd;
  border-radius: 2px;
  background: linear-gradient(#eaf2fd, #c6dcf9);
}

/* status bar */
.statusbar {
  height: 24px;
  display: flex;
  padding: 2px 5px 2px 1px;
  border-top: 1px solid #8a8a8a;
  box-shadow: inset 0 1px #fff;
  background: #f0edec;
}
.pane {
  border-right: 1px solid #d2cfce;
}
.grow {
  flex: 1;
}
.wide {
  width: 133px;
}
.narrow {
  width: 86px;
}

/* taskbar */
.taskbar {
  height: 40px;
  display: flex;
  gap: 3px;
  border-top: 1px solid #2a3646;
  box-shadow: inset 0 1px #bdd0e6;
  background: linear-gradient(90deg, #8295ad, #8295ad 54px, #a3bddb 84px);
}
.start {
  width: 38px;
  margin: 0 10px 0 8px;
}
.task {
  width: 59px;
  display: flex;
  align-items: center;
  justify-content: center;
  border: 1px solid transparent;
}
.task.running {
  border-color: #3b4c62;
  border-radius: 3px;
  box-shadow: inset 0 0 0 1px #d3e1f1;
  background: linear-gradient(135deg, #c9d9ec, #a9c1de 60%, #b7cce5);
}
.task.active {
  box-shadow: inset 0 0 0 1px #f4f8fc;
  background: linear-gradient(135deg, #e9eff7, #c2d3e8 60%, #d7e3f1);
}
.tray {
  display: flex;
  align-items: center;
  margin-left: auto;
  padding-left: 40px;
  color: #fff;
  background: linear-gradient(90deg, #a3bddb, #8295ad 30px);
}
.lang {
  margin: 0 8px 6px 0;
}
.tray-btn {
  width: 24px;
  height: 24px;
  display: flex;
  align-items: center;
  justify-content: center;
}
.clock {
  display: flex;
  flex-direction: column;
  width: 80px;
  line-height: 17px;
  text-align: center;
}
.show-desktop {
  width: 14px;
  height: 39px;
  border: 1px solid #455468;
  box-shadow: inset 0 0 0 1px #9fb0c3;
  background: linear-gradient(#7487a0, #4e6078 50%, #6c8099);
}
```
